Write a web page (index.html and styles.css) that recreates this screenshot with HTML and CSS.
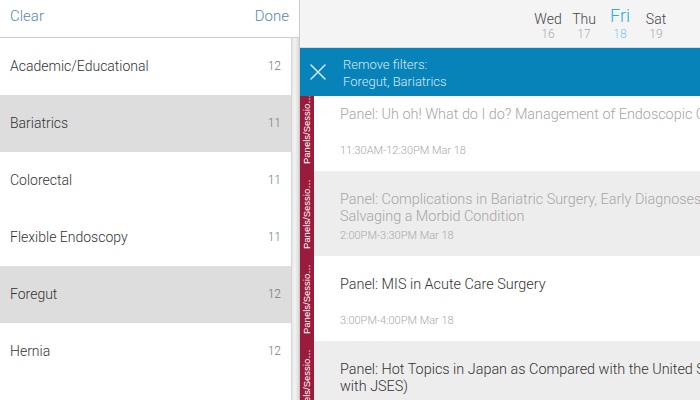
FILE: index.html
```html
<!DOCTYPE html>
<html lang="en">
<head>
<meta charset="utf-8">
<title>Schedule filters</title>
<link rel="stylesheet" href="styles.css">
</head>
<body>
<div class="app">
  <aside class="filters">
    <header class="filters-head">
      <span class="head-btn">Clear</span>
      <span class="head-btn">Done</span>
    </header>
    <div class="filters-body">
      <ul class="filter-list">
        <li class="filter-row"><span class="filter-name">Academic/Educational</span><span class="filter-count">12</span></li>
        <li class="filter-row selected"><span class="filter-name">Bariatrics</span><span class="filter-count">11</span></li>
        <li class="filter-row"><span class="filter-name">Colorectal</span><span class="filter-count">11</span></li>
        <li class="filter-row"><span class="filter-name">Flexible Endoscopy</span><span class="filter-count">11</span></li>
        <li class="filter-row selected"><span class="filter-name">Foregut</span><span class="filter-count">12</span></li>
        <li class="filter-row"><span class="filter-name">Hernia</span><span class="filter-count">12</span></li>
      </ul>
      <div class="scroll-track"></div>
    </div>
  </aside>

  <main class="schedule">
    <header class="days">
      <div class="day"><span class="day-name">Wed</span><span class="day-num">16</span></div>
      <div class="day"><span class="day-name">Thu</span><span class="day-num">17</span></div>
      <div class="day active"><span class="day-name">Fri</span><span class="day-num">18</span></div>
      <div class="day"><span class="day-name">Sat</span><span class="day-num">19</span></div>
    </header>

    <div class="filter-bar">
      <svg class="close-icon" width="16" height="16" viewBox="0 0 16 16" aria-hidden="true">
        <path d="M1 1 L15 15 M15 1 L1 15" stroke="currentColor" stroke-width="1.5" fill="none" stroke-linecap="round"/>
      </svg>
      <div class="filter-text">
        <div>Remove filters:</div>
        <div>Foregut, Bariatrics</div>
      </div>
    </div>

    <div class="sessions-viewport">
      <ul class="sessions">
        <li class="session past">
          <div class="session-tag"><span class="tag-label">Panels/Sessions</span></div>
          <div class="session-body">
            <div class="session-title">Panel: Uh oh! What do I do? Management of Endoscopic Complications</div>
            <div class="session-time">11:30AM-12:30PM Mar 18</div>
          </div>
        </li>
        <li class="session past alt">
          <div class="session-tag"><span class="tag-label">Panels/Sessions</span></div>
          <div class="session-body">
            <div class="session-title">Panel: Complications in Bariatric Surgery, Early Diagnoses and Salvaging a Morbid Condition</div>
            <div class="session-time">2:00PM-3:30PM Mar 18</div>
          </div>
        </li>
        <li class="session">
          <div class="session-tag"><span class="tag-label">Panels/Sessions</span></div>
          <div class="session-body">
            <div class="session-title">Panel: MIS in Acute Care Surgery</div>
            <div class="session-time">3:00PM-4:00PM Mar 18</div>
          </div>
        </li>
        <li class="session alt">
          <div class="session-tag"><span class="tag-label">Panels/Sessions</span></div>
          <div class="session-body">
            <div class="session-title">Panel: Hot Topics in Japan as Compared with the United States (Joint with JSES)</div>
            <div class="session-time">4:30PM-5:30PM Mar 18</div>
          </div>
        </li>
      </ul>
    </div>
  </main>
</div>
</body>
</html>
```

FILE: styles.css
```css
* {
  box-sizing: border-box;
}

html, body {
  margin: 0;
  padding: 0;
  width: 700px;
  height: 400px;
  overflow: hidden;
  background: #ffffff;
  font-family: Roboto, "Liberation Sans", Arial, sans-serif;
  font-weight: 300;
}

ul {
  list-style: none;
  margin: 0;
  padding: 0;
}

.app {
  display: flex;
  width: 700px;
  height: 400px;
}

/* ---------- Left filter panel ---------- */
.filters {
  width: 300px;
  flex: none;
  display: flex;
  flex-direction: column;
  background: #ffffff;
  border-right: 1px solid #c9c9c9;
}

.filters-head {
  height: 38px;
  flex: none;
  display: flex;
  align-items: center;
  justify-content: space-between;
  padding: 0 10px 5px 10px;
  border-bottom: 1px solid #cfcfcf;
}

.head-btn {
  font-size: 15px;
  color: #5b87ac;
}

.filters-body {
  flex: 1;
  display: flex;
  min-height: 0;
}

.filter-list {
  flex: 1;
}

.filter-row {
  height: 57px;
  display: flex;
  align-items: center;
  justify-content: space-between;
  padding: 0 10px 1px 10px;
  background: #ffffff;
}

.filter-row.selected {
  background: #dddddd;
}

.filter-name {
  font-size: 14px;
  color: #333333;
}

.filter-count {
  font-size: 12px;
  color: #777777;
}

.scroll-track {
  width: 8px;
  flex: none;
  background: linear-gradient(to right, #e6e6e6, #f4f4f4 40%, #dadada);
  border-left: 1px solid #d6d6d6;
}

/* ---------- Right schedule panel ---------- */
.schedule {
  flex: 1;
  display: flex;
  flex-direction: column;
  min-width: 0;
  background: #ffffff;
}

.days {
  height: 48px;
  flex: none;
  display: flex;
  justify-content: flex-end;
  align-items: flex-start;
  padding: 8px 26px 0 0;
  background: #f4f4f4;
  border-bottom: 1px solid #d9d9d9;
}

.day {
  width: 36px;
  display: flex;
  flex-direction: column;
  align-items: center;
}

.day-name {
  height: 19px;
  display: flex;
  align-items: flex-end;
  font-size: 14px;
  line-height: 16px;
  color: #444444;
}

.day-num {
  font-size: 12px;
  line-height: 14px;
  color: #aaaaaa;
}

.day.active .day-name {
  font-size: 18px;
  line-height: 20px;
  color: #29aee3;
  padding-bottom: 1px;
}

.day.active .day-num {
  color: #7fcbeb;
}

.filter-bar {
  height: 48px;
  flex: none;
  display: flex;
  align-items: center;
  gap: 17px;
  padding: 0 0 0 10px;
  background: #0883b9;
  color: #d4eaf5;
}

.close-icon {
  flex: none;
  color: #d4eaf5;
}

.filter-text {
  font-size: 13px;
  line-height: 17px;
  margin-top: 2px;
}

.sessions-viewport {
  flex: 1;
  overflow: hidden;
  min-height: 0;
}

.sessions {
  margin-top: -10px;
}

.session {
  height: 85px;
  display: flex;
  background: #ffffff;
}

.session.alt {
  background: #ededed;
}

.session-tag {
  width: 14px;
  flex: none;
  background: #9b1b3d;
  display: flex;
  align-items: center;
  justify-content: center;
}

.tag-label {
  writing-mode: vertical-rl;
  transform: rotate(180deg);
  height: 70px;
  white-space: nowrap;
  overflow: hidden;
  text-overflow: ellipsis;
  font-family: "Liberation Sans", Arial, sans-serif;
  font-size: 9.5px;
  font-weight: 400;
  line-height: 14px;
  color: #ffffff;
}

.session-body {
  flex: 1;
  min-width: 0;
  padding: 20px 0 0 26px;
}

.session-title {
  height: 34px;
  overflow: hidden;
  font-size: 14.4px;
  line-height: 17px;
  color: #333333;
  width: 450px;
}

.session-time {
  margin-top: 5px;
  font-size: 11px;
  line-height: 12px;
  color: #a8a8a8;
}

.session.past .session-title {
  color: #a6a6a6;
}
```
